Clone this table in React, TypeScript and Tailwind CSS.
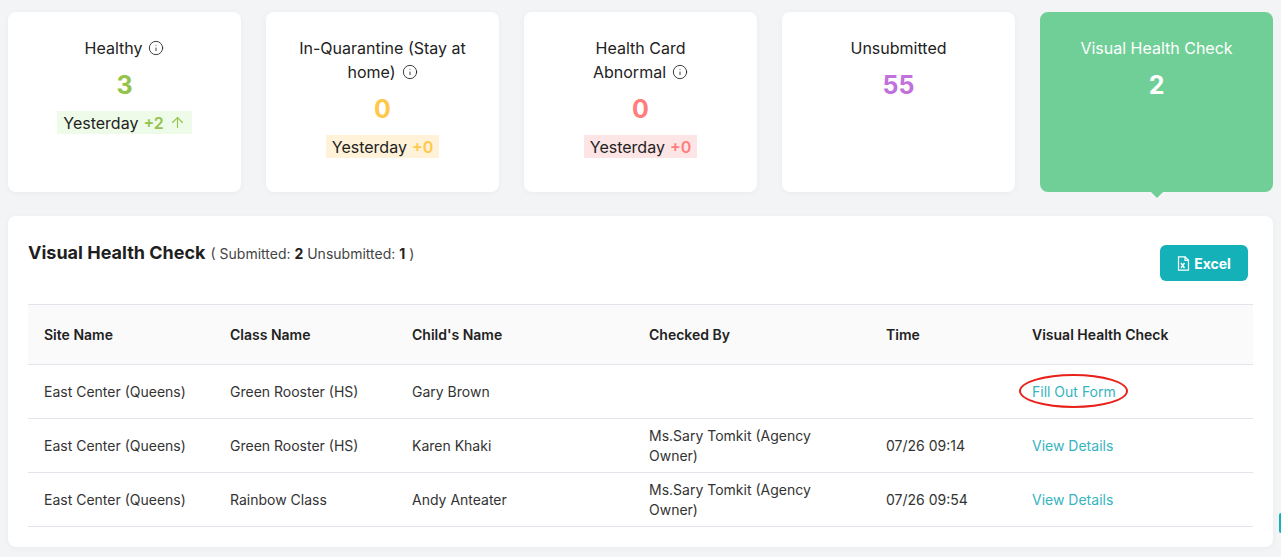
import { Info, ArrowUp } from "lucide-react";

const ExcelIcon = () => (
  <svg width="13" height="15" viewBox="0 0 13 15" fill="none" stroke="currentColor" strokeWidth="1.2">
    <path d="M1.5 0.8h6.5l3.5 3.5v9.9h-10z" />
    <path d="M8 0.8v3.5h3.5" />
    <path d="M4 7l3.5 5M7.5 7l-3.5 5" strokeWidth="1.4" />
  </svg>
);

type Stat = {
  title: React.ReactNode;
  value: string;
  color: string;
  badge?: { bg: string; delta: string; deltaColor: string; up?: boolean };
  info?: boolean;
};

const stats: Stat[] = [
  {
    title: "Healthy",
    value: "3",
    color: "text-[#93c34b]",
    info: true,
    badge: { bg: "bg-[#eefbe8]", delta: "+2", deltaColor: "text-[#93c34b]", up: true },
  },
  {
    title: (
      <>
        In-Quarantine (Stay at
        <br />
        home)
      </>
    ),
    value: "0",
    color: "text-[#ffc84a]",
    info: true,
    badge: { bg: "bg-[#fff2d9]", delta: "+0", deltaColor: "text-[#ffc84a]" },
  },
  {
    title: (
      <>
        Health Card
        <br />
        Abnormal
      </>
    ),
    value: "0",
    color: "text-[#ff7d7d]",
    info: true,
    badge: { bg: "bg-[#fde5e5]", delta: "+0", deltaColor: "text-[#ff7d7d]" },
  },
  { title: "Unsubmitted", value: "55", color: "text-[#c270dc]" },
];

const rows = [
  { site: "East Center (Queens)", cls: "Green Rooster (HS)", child: "Gary Brown", by: "", time: "", action: "Fill Out Form" },
  { site: "East Center (Queens)", cls: "Green Rooster (HS)", child: "Karen Khaki", by: "Ms.Sary Tomkit (Agency Owner)", time: "07/26 09:14", action: "View Details" },
  { site: "East Center (Queens)", cls: "Rainbow Class", child: "Andy Anteater", by: "Ms.Sary Tomkit (Agency Owner)", time: "07/26 09:54", action: "View Details" },
];

const headers = ["Site Name", "Class Name", "Child's Name", "Checked By", "Time", "Visual Health Check"];

export default function App() {
  return (
    <div className="relative min-h-screen overflow-hidden bg-[#f3f4f6] px-2 pt-[12px] pb-[11px] font-['Inter',sans-serif] text-[#222]">
      <div className="grid h-[180px] grid-cols-5 gap-[25px]">
        {stats.map((s, i) => (
          <div key={i} className="flex flex-col items-center rounded-lg bg-white pt-[24px] text-center shadow-[0_1px_6px_rgba(0,0,0,0.04)]">
            <div className="text-[16px] leading-[24px] text-[#222]">
              {s.title}
              {s.info && <Info size={16} strokeWidth={1.3} className="ml-[6px] inline-block -translate-y-[2px]" />}
            </div>
            <div className={`mt-[9px] text-[25px] font-bold leading-[32px] ${s.color}`}>{s.value}</div>
            {s.badge && (
              <div className={`mt-[10px] flex h-[23px] items-center px-[6px] text-[16px] ${s.badge.bg}`}>
                <span>Yesterday</span>
                <span className={`ml-[5px] font-semibold ${s.badge.deltaColor}`}>{s.badge.delta}</span>
                {s.badge.up && <ArrowUp size={17} strokeWidth={1.6} className={`ml-[5px] ${s.badge.deltaColor}`} />}
              </div>
            )}
          </div>
        ))}
        <div className="relative flex flex-col items-center rounded-lg bg-[#70cf97] pt-[24px] text-center text-white">
          <div className="text-[16px] leading-[24px]">Visual Health Check</div>
          <div className="mt-[9px] text-[25px] font-bold leading-[32px]">2</div>
          <div className="absolute -bottom-[6px] left-[111px] h-0 w-0 border-l-[6px] border-r-[6px] border-t-[6px] border-l-transparent border-r-transparent border-t-[#70cf97]" />
        </div>
      </div>

      <div className="mt-[24px] rounded-lg bg-white px-[20px] pt-[25px] pb-[20px] shadow-[0_1px_6px_rgba(0,0,0,0.04)]">
        <div className="flex items-start justify-between pr-[5px]">
          <div className="flex items-baseline leading-[24px]">
            <span className="text-[18px] font-bold text-[#1f1f1f]">Visual Health Check</span>
            <span className="ml-[5px] text-[14px] text-[#444]">
              ( Submitted: <b className="text-[#222]">2</b> Unsubmitted: <b className="text-[#222]">1</b> )
            </span>
          </div>
          <button className="mt-[4px] flex h-[36px] w-[88px] items-center justify-center gap-[4px] rounded-md bg-[#14b2b8] text-[14px] font-bold text-white">
            <ExcelIcon />
            Excel
          </button>
        </div>

        <table className="mt-[23px] w-full table-fixed border-collapse text-left text-[14px]">
          <colgroup>
            <col className="w-[186px]" />
            <col className="w-[182px]" />
            <col className="w-[237px]" />
            <col className="w-[237px]" />
            <col className="w-[146px]" />
            <col className="w-[237px]" />
          </colgroup>
          <thead>
            <tr className="h-[60px] border-y border-[#e4e4ec] bg-[#fafafa]">
              {headers.map((h) => (
                <th key={h} className="px-[16px] font-semibold text-[#222]">
                  {h}
                </th>
              ))}
            </tr>
          </thead>
          <tbody className="text-[#333]">
            {rows.map((r, i) => (
              <tr key={i} className="h-[54px] border-b border-[#e4e4ec]">
                <td className="px-[16px]">{r.site}</td>
                <td className="px-[16px]">{r.cls}</td>
                <td className="px-[16px]">{r.child}</td>
                <td className="px-[16px] leading-5">{r.by}</td>
                <td className="px-[16px]">{r.time}</td>
                <td className="px-[16px]">
                  <span className="relative text-[#36b4c0]">
                    {r.action}
                    {r.action === "Fill Out Form" && (
                      <span className="absolute -left-[13px] -right-[12px] -top-[9px] -bottom-[8px] rounded-[50%] border-2 border-[#e8221b]" />
                    )}
                  </span>
                </td>
              </tr>
            ))}
          </tbody>
        </table>
      </div>
      <div className="absolute right-0 top-[513px] h-[20px] w-[2px] rounded-l bg-[#14b2b8]" />
    </div>
  );
}
